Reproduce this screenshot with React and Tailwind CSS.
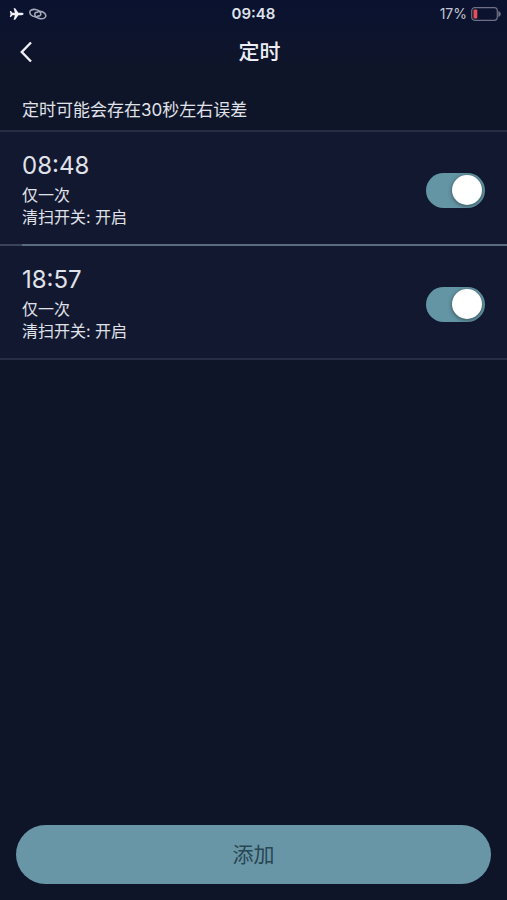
import React, { useState } from "react";

const initialTimers = [
  { id: 1, time: "08:48", repeat: "仅一次", action: "清扫开关: 开启", enabled: true },
  { id: 2, time: "18:57", repeat: "仅一次", action: "清扫开关: 开启", enabled: true },
];

export default function App() {
  const [timers, setTimers] = useState(initialTimers);

  const toggle = (id) =>
    setTimers((list) => list.map((t) => (t.id === id ? { ...t, enabled: !t.enabled } : t)));

  return (
    <div className="flex min-h-screen flex-col bg-[#0f1528] font-[Inter,'Noto_Sans_CJK_SC',sans-serif] text-[#e0e2ea]">
      <div className="bg-linear-to-b from-[#0a1230] to-[#0f1528]">
        <StatusBar />
        <header className="grid h-12 grid-cols-[1fr_auto_1fr] items-center pr-2 pl-5">
          <button type="button" aria-label="返回" className="flex h-10 w-8 items-center">
            <BackIcon />
          </button>
          <h1 className="text-[21px] font-medium text-[#eceef4]">定时</h1>
        </header>
      </div>

      <p className="px-[22px] pt-[22px] pb-2 text-[17px] leading-6">定时可能会存在30秒左右误差</p>

      <ul className="border-y-2 border-[#272d42] bg-[#12182f]">
        {timers.map((timer, i) => (
          <React.Fragment key={timer.id}>
            {i > 0 && (
              <li aria-hidden="true" className="flex h-0.5 bg-[#3a4358]">
                <span className="ml-[22px] flex-1 bg-[#5b6b7f]" />
              </li>
            )}
            <TimerRow timer={timer} onToggle={() => toggle(timer.id)} />
          </React.Fragment>
        ))}
      </ul>

      <div className="mt-auto px-4 pb-4">
        <button
          type="button"
          className="h-[59px] w-full rounded-full bg-[#6996a6] text-[21px] text-[#284653]"
        >
          添加
        </button>
      </div>
    </div>
  );
}

function TimerRow({ timer, onToggle }) {
  const inputId = `timer-${timer.id}`;
  return (
    <li className="flex h-28 items-center justify-between px-[22px]">
      <label htmlFor={inputId} className="flex flex-col">
        <span className="text-2xl leading-9">{timer.time}</span>
        <span className="text-base leading-[22px]">{timer.repeat}</span>
        <span className="text-base leading-[22px]">{timer.action}</span>
      </label>
      <Switch id={inputId} checked={timer.enabled} onChange={onToggle} />
    </li>
  );
}

function Switch({ id, checked, onChange }) {
  return (
    <input
      id={id}
      type="checkbox"
      role="switch"
      checked={checked}
      onChange={onChange}
      className="mt-1 flex h-[35px] w-[59px] cursor-pointer appearance-none items-center rounded-full bg-[#3a4358] px-[3px] before:size-[30px] before:rounded-full before:bg-white before:shadow-[0_1px_4px_rgba(0,0,0,0.5)] before:content-[''] checked:justify-end checked:bg-[#6495a5]"
    />
  );
}

function StatusBar() {
  return (
    <div className="grid h-7 grid-cols-3 items-center px-1.5 text-sm">
      <div className="flex items-center gap-1 pl-0.5">
        <PlaneIcon />
        <LinkIcon />
      </div>
      <time className="text-center text-[15px] font-semibold text-[#dfe2ea]">09:48</time>
      <div className="flex items-center justify-end gap-1 text-[#c3c6d2]">
        <span>17%</span>
        <BatteryIcon />
      </div>
    </div>
  );
}

function PlaneIcon() {
  return (
    <svg width="16" height="14" viewBox="0 0 16 14" fill="#f0f2f8" aria-hidden="true">
      <path d="M15.600 7c0 .7-.9 1.200-2 1.200H10.400L7.200 12.800H5.600l1.300-4.600H4.400L3 9.900H1.800L2.500 7l-.7-2.900H3l1.400 1.700h2.500L5.600 1.200h1.600l3.200 4.600h3.200c1.100 0 2 .5 2 1.200z" />
    </svg>
  );
}

function LinkIcon() {
  return (
    <svg width="20" height="14" viewBox="0 0 20 14" fill="none" stroke="#a3a7b8" strokeWidth="1.600" strokeLinecap="round" aria-hidden="true">
      <path d="M9.500 9.600C6.500 10.500 2.200 8.700 1.800 5.900 1.400 3.300 4.300 2 7.500 2.500c3.200.5 5.700 2.700 5.300 4.900-.2 1.200-1.500 1.800-2.800 1.500" />
      <path d="M10.100 4.600c3-.9 7.300.9 7.700 3.700.4 2.600-2.500 3.900-5.700 3.400-3.200-.5-5.700-2.700-5.300-4.900.2-1.200 1.500-1.800 2.800-1.500" />
    </svg>
  );
}

function BatteryIcon() {
  return (
    <svg width="30" height="14" viewBox="0 0 30 14" fill="none" aria-hidden="true">
      <rect x="0.700" y="0.700" width="25.600" height="12.600" rx="3" stroke="#706f84" strokeWidth="1.200" />
      <rect x="2.500" y="2.500" width="3.800" height="9" rx="1" fill="#e84e58" />
      <path d="M27.300 4c1.600.6 2.500 1.700 2.500 3s-.9 2.400-2.500 3z" fill="#706f84" />
    </svg>
  );
}

function BackIcon() {
  return (
    <svg width="12" height="22" viewBox="0 0 12 22" fill="none" stroke="#eef0f6" strokeWidth="2.400" aria-hidden="true">
      <path d="M11 1.500 1.800 11 11 20.500" />
    </svg>
  );
}
